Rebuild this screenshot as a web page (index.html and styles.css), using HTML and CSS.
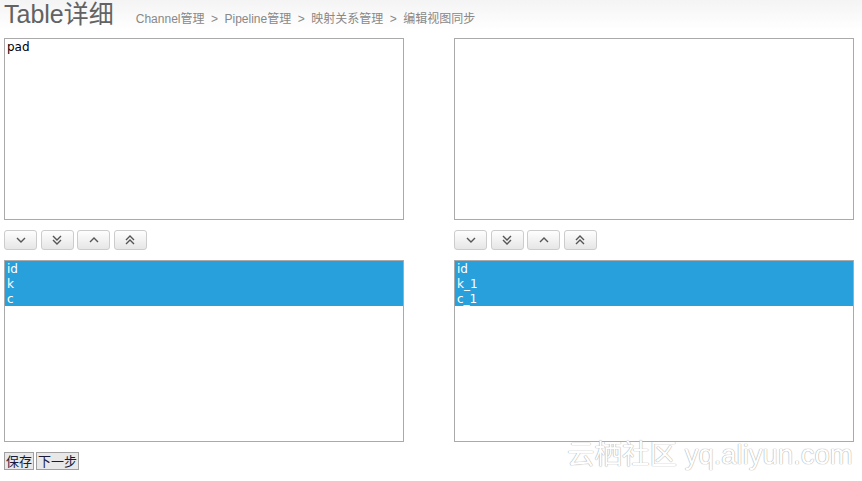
FILE: index.html
```html
<!DOCTYPE html>
<html>
<head>
<meta charset="utf-8">
<link rel="stylesheet" href="styles.css">
</head>
<body>
<div class="header">
  <span class="title">Table详细</span>
  <span class="crumbs">Channel管理<span class="sep">&gt;</span>Pipeline管理<span class="sep">&gt;</span>映射关系管理<span class="sep">&gt;</span>编辑视图同步</span>
</div>
<div class="main">
  <div class="col">
    <div class="box"><div class="item">pad</div></div>
    <div class="btns">
      <button class="ibtn"><svg width="12" height="10" viewBox="0 0 12 10"><polyline points="2,3 6,7 10,3" /></svg></button>
      <button class="ibtn"><svg width="12" height="12" viewBox="0 0 12 12"><polyline points="2,2 6,6 10,2" /><polyline points="2,6 6,10 10,6" /></svg></button>
      <button class="ibtn"><svg width="12" height="10" viewBox="0 0 12 10"><polyline points="2,7 6,3 10,7" /></svg></button>
      <button class="ibtn"><svg width="12" height="12" viewBox="0 0 12 12"><polyline points="2,6 6,2 10,6" /><polyline points="2,10 6,6 10,10" /></svg></button>
    </div>
    <div class="box">
      <div class="item sel">id</div>
      <div class="item sel">k</div>
      <div class="item sel">c</div>
    </div>
  </div>
  <div class="col">
    <div class="box"></div>
    <div class="btns">
      <button class="ibtn"><svg width="12" height="10" viewBox="0 0 12 10"><polyline points="2,3 6,7 10,3" /></svg></button>
      <button class="ibtn"><svg width="12" height="12" viewBox="0 0 12 12"><polyline points="2,2 6,6 10,2" /><polyline points="2,6 6,10 10,6" /></svg></button>
      <button class="ibtn"><svg width="12" height="10" viewBox="0 0 12 10"><polyline points="2,7 6,3 10,7" /></svg></button>
      <button class="ibtn"><svg width="12" height="12" viewBox="0 0 12 12"><polyline points="2,6 6,2 10,6" /><polyline points="2,10 6,6 10,10" /></svg></button>
    </div>
    <div class="box">
      <div class="item sel">id</div>
      <div class="item sel">k_1</div>
      <div class="item sel">c_1</div>
    </div>
  </div>
</div>
<div class="footer">
  <button class="pbtn">保存</button><button class="pbtn">下一步</button>
</div>
<div class="watermark">云栖社区 yq.aliyun.com</div>
</body>
</html>
```
FILE: styles.css
```css
html, body {
  margin: 0;
  padding: 0;
  background: #fff;
  font-family: "Liberation Sans", "Noto Sans CJK SC", sans-serif;
}
body {
  width: 862px;
  height: 481px;
  position: relative;
  overflow: hidden;
}
.header {
  height: 38px;
  padding-left: 4px;
  display: flex;
  align-items: baseline;
  background: linear-gradient(#f4f4f4, #fff 30px);
  box-sizing: border-box;
}
.title {
  font-size: 25px;
  color: #626262;
  line-height: 28px;
}
.crumbs {
  font-size: 12px;
  color: #888;
  margin-left: 22px;
}
.sep {
  padding: 0 6.5px;
}
.main {
  display: flex;
  gap: 50px;
  padding-left: 4px;
}
.col {
  width: 400px;
  display: flex;
  flex-direction: column;
}
.box {
  height: 182px;
  border: 1px solid #aaa;
  box-sizing: border-box;
  background: #fff;
}
.item {
  font-family: "DejaVu Sans", sans-serif;
  font-size: 12px;
  line-height: 13px;
  padding: 2px 0 0 2px;
  color: #000;
}
.item.sel {
  background: #27a0db;
  color: #fff;
}
.btns {
  display: flex;
  gap: 3.5px;
  margin: 10px 0;
}
.ibtn {
  width: 33px;
  height: 20px;
  padding: 0;
  margin: 0;
  border: 1px solid #ccc;
  border-radius: 3px;
  background: linear-gradient(#fefefe, #e6e6e6);
  display: flex;
  align-items: center;
  justify-content: center;
}
.ibtn svg polyline {
  fill: none;
  stroke: #555;
  stroke-width: 1.4;
}
.footer {
  padding: 10px 0 0 4px;
  display: flex;
  gap: 2px;
}
.pbtn {
  font-family: "Noto Sans CJK SC", sans-serif;
  font-size: 13px;
  line-height: 14px;
  height: 18px;
  box-sizing: border-box;
  padding: 0 1px;
  margin: 0;
  border: 1px solid #a0a0a0;
  background: #e8e8e8;
  color: #1a1a3a;
  border-radius: 0;
}
.watermark {
  position: absolute;
  left: 567px;
  top: 439px;
  font-family: "Liberation Sans", "Noto Sans CJK SC", sans-serif;
  font-size: 27.5px;
  line-height: 32px;
  color: #fff;
  text-shadow: 0 0 1px #999, 0 0 1px #bbb;
  white-space: nowrap;
}
```
